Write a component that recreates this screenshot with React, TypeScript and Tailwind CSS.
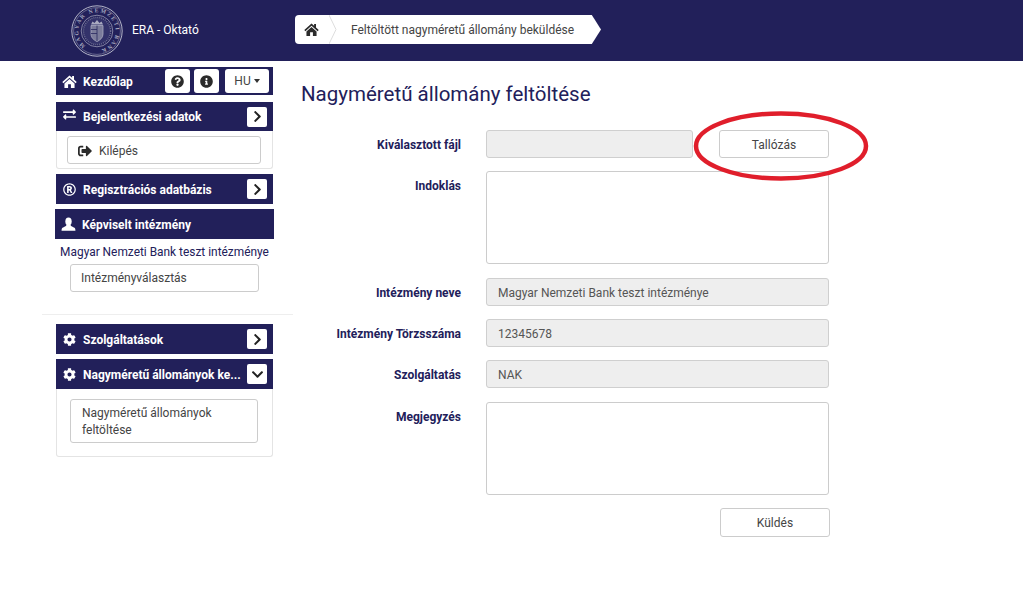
import { FaExchangeAlt, FaSignOutAlt, FaRegRegistered, FaCog, FaChevronRight, FaChevronDown, FaQuestionCircle, FaInfoCircle } from "react-icons/fa";
import type { ReactNode } from "react";

function HomeIcon({ size = 15 }: { size?: number }) {
  return (
    <svg width={size} height={size} viewBox="0 0 16 16" fill="currentColor">
      <path d="M8 1.5 L0.3 8.6 L1.5 9.8 L8 3.9 L14.5 9.8 L15.7 8.6 L12.8 5.9 V2 H10.8 V4.1z" />
      <path d="M8 5.2 L2.6 10 V15 H6.5 V10.8 H9.5 V15 H13.4 V10z" />
    </svg>
  );
}

function UserIcon() {
  return (
    <svg width="15" height="15" viewBox="0 0 16 16" fill="currentColor">
      <ellipse cx="8" cy="4.8" rx="3.4" ry="4.3" />
      <path d="M5.8 8.4 C5.6 10 3 10.4 1.6 11.4 C0.8 12 0.6 13.4 0.6 14.6 H15.4 C15.4 13.4 15.2 12 14.4 11.4 C13 10.4 10.4 10 10.2 8.4z" />
    </svg>
  );
}

function Seal() {
  return (
    <svg width="52" height="52" viewBox="0 0 52 52" className="shrink-0">
      <defs>
        <path id="ring" d="M26 26 m-18.7 0 a18.7 18.7 0 1 1 37.4 0 a18.7 18.7 0 1 1 -37.4 0" />
      </defs>
      <circle cx="26" cy="26" r="25.2" fill="none" stroke="#b4b5c8" strokeWidth="1" />
      <circle cx="26" cy="26" r="23.4" fill="none" stroke="#7f80a0" strokeWidth="0.7" />
      <circle cx="26" cy="26" r="15.8" fill="none" stroke="#9a9bb5" strokeWidth="0.8" />
      <g transform="rotate(-52 26 26)">
        <text fill="#a9aac0" fontSize="5.6" fontFamily="'Liberation Serif', serif" fontWeight="700">
          <textPath href="#ring" textLength="100" lengthAdjust="spacing">MAGYAR NEMZETI BANK</textPath>
        </text>
      </g>
      <circle cx="26" cy="26" r="13.6" fill="#33326a" stroke="#6d6e92" strokeWidth="1.5" strokeDasharray="1 1" />
      <path d="M20 20.5 h12 v8.5 c0 4 -3 6 -6 7.6 c-3 -1.6 -6 -3.6 -6 -7.6z" fill="#7b7c9b" stroke="#a9aac0" strokeWidth="0.8" />
      <path d="M26 20.5 v15.6 M20 24.5 h6 M20 28.5 h6" stroke="#2a2960" strokeWidth="0.8" />
      <path d="M20 19.6 l1.5 -3 l2 1.5 l2.5 -3 l2.5 3 l2 -1.5 l1.5 3z" fill="#a9aac0" />
    </svg>
  );
}

function Head({ icon, children, right, wide, tall = true }: { icon: ReactNode; children: ReactNode; right?: ReactNode; wide?: boolean; tall?: boolean }) {
  return (
    <div className={`flex items-center bg-[#22205a] text-white ${tall ? "h-[30px]" : "h-[29px]"} pl-[6px] pr-[6px] ${wide ? "-mx-px" : ""}`}>
      <span className="w-[15px] flex justify-center text-[13px] mr-[6px] shrink-0">{icon}</span>
      <span className="flex-1 min-w-0 pt-px text-[12px] font-bold whitespace-nowrap">{children}</span>
      {right}
    </div>
  );
}

function Arrow({ down }: { down?: boolean }) {
  return (
    <span className="w-[20px] h-[20px] shrink-0 bg-white rounded-[2px] flex items-center justify-center text-[#222222] text-[13px]">
      {down ? <FaChevronDown /> : <FaChevronRight />}
    </span>
  );
}

function Field({ label, children, className }: { label: string; children: ReactNode; className?: string }) {
  return (
    <div className={`flex items-start ${className ?? ""}`}>
      <label className="w-[160px] pt-[7px] text-right font-bold text-[12px] text-[#22205a] mr-[25px] leading-[16px]">{label}</label>
      <div className="w-[343px]">{children}</div>
    </div>
  );
}

function Disabled({ children }: { children?: ReactNode }) {
  return (
    <div className="h-[28px] bg-[#eeeeee] border border-[#cfcfcf] rounded-[3px] px-[11px] pt-px flex items-center text-[12px] text-[#555555]">
      {children}
    </div>
  );
}

export default function App() {
  return (
    <div className="w-[1023px] h-[595px] bg-white overflow-hidden relative font-['Roboto','Noto_Sans',sans-serif] text-[#333333]">
      <header className="h-[61px] bg-[#22205a] flex items-center pl-[71px]">
        <Seal />
        <span className="ml-[9px] text-white text-[12px] w-[94px] -mt-[2px]">ERA - Oktató</span>
        <div className="ml-[69px] -mt-[2px] h-[29px] w-[306px] bg-white rounded-l-[4px] [clip-path:polygon(0_0,97%_0,100%_50%,97%_100%,0_100%)] flex items-center relative">
          <span className="w-[32px] flex justify-center text-[#2b2b2b]"><HomeIcon /></span>
          <svg width="8" height="29" viewBox="0 0 8 29" className="shrink-0 ml-[2px]">
            <path d="M0 0 L7 14.5 L0 29" fill="none" stroke="#dddddd" />
          </svg>
          <span className="ml-[14px] text-[12px] text-[#444444] whitespace-nowrap">Feltöltött nagyméretű állomány beküldése</span>
        </div>
      </header>

      <div className="flex">
        <aside className="w-[251px] ml-[42px] pt-[6px] shrink-0">
          <div className="ml-[14px] w-[217px]">
            <div className="flex items-center bg-[#22205a] text-white h-[28px] pl-[6px] pr-[4px]">
              <span className="w-[15px] flex justify-center mr-[6px]"><HomeIcon /></span>
              <span className="flex-1 pt-px text-[12px] font-bold">Kezdőlap</span>
              <span className="w-[25px] h-[24px] bg-white rounded-[3px] flex items-center justify-center text-[13px] text-[#2b2b2b] mr-[4px]"><FaQuestionCircle /></span>
              <span className="w-[25px] h-[24px] bg-white rounded-[3px] flex items-center justify-center text-[13px] text-[#2b2b2b] mr-[6px]"><FaInfoCircle /></span>
              <span className="w-[44px] h-[24px] bg-white rounded-[3px] flex items-center justify-center gap-[3px] text-[12px] text-[#444444]">HU
                <span className="border-x-[3.5px] border-x-transparent border-t-[4px] border-t-[#333333]" />
              </span>
            </div>

            <div className="mt-[7px]">
              <Head tall={false} icon={<FaExchangeAlt className="-mt-[5px]" />} right={<Arrow />}>Bejelentkezési adatok</Head>
              <div className="h-[38px] border border-t-0 border-[#e4e4e4] rounded-b-[3px] pl-[10px] pr-[11px] pt-[5px]">
                <div className="h-[28px] border border-[#cccccc] rounded-[3px] flex items-center pl-[10px] pt-px text-[12px] text-[#444444]">
                  <FaSignOutAlt className="text-[14px] text-[#2b2b2b] mr-[7px]" />Kilépés
                </div>
              </div>
            </div>

            <div className="mt-[5px]"><Head icon={<FaRegRegistered />} right={<Arrow />}>Regisztrációs adatbázis</Head></div>
            <div className="mt-[5px]"><Head wide icon={<UserIcon />}>Képviselt intézmény</Head></div>
            <div className="text-center text-[11.9px] text-[#22205a] mt-[3px] pt-px h-[18px] leading-[18px] whitespace-nowrap">Magyar Nemzeti Bank teszt intézménye</div>
            <div className="mt-[4px] ml-[14px] w-[189px] h-[28px] border border-[#cccccc] rounded-[3px] flex items-center pl-[10px] text-[12px] text-[#444444]">Intézményválasztás</div>
          </div>

          <div className="h-px bg-[#eeeeee] mt-[22px]" />

          <div className="ml-[14px] w-[217px] mt-[9px]">
            <Head icon={<FaCog />} right={<Arrow />}>Szolgáltatások</Head>
            <div className="mt-[5px]">
              <Head icon={<FaCog />} right={<Arrow down />}>Nagyméretű állományok ke...</Head>
              <div className="h-[68px] border border-t-0 border-[#e4e4e4] rounded-b-[3px] pt-[10px] pl-[13px]">
                <div className="w-[188px] h-[44px] border border-[#cccccc] rounded-[3px] px-[11px] py-[5px] text-[12px] leading-[17px] text-[#444444]">Nagyméretű állományok feltöltése</div>
              </div>
            </div>
          </div>
        </aside>

        <main className="ml-[8px] w-[600px]">
          <h1 className="mt-[19px] text-[20.5px] leading-[28px] text-[#22205a] whitespace-nowrap">Nagyméretű állomány feltöltése</h1>
          <div className="mt-[22px]">
            <Field label="Kiválasztott fájl">
              <div className="flex justify-between">
                <div className="w-[207px]"><Disabled /></div>
                <div className="w-[110px] h-[28px] border border-[#cccccc] rounded-[3px] pt-px flex items-center justify-center text-[12px] text-[#444444]">Tallózás</div>
              </div>
            </Field>
            <Field label="Indoklás" className="mt-[13px]">
              <div className="h-[93px] border border-[#cccccc] rounded-[3px]" />
            </Field>
            <Field label="Intézmény neve" className="mt-[14px]"><Disabled>Magyar Nemzeti Bank teszt intézménye</Disabled></Field>
            <Field label="Intézmény Törzsszáma" className="mt-[13px]"><Disabled>12345678</Disabled></Field>
            <Field label="Szolgáltatás" className="mt-[13px]"><Disabled>NAK</Disabled></Field>
            <Field label="Megjegyzés" className="mt-[14px]">
              <div className="h-[93px] border border-[#cccccc] rounded-[3px]" />
            </Field>
            <div className="mt-[13px] ml-[419px] w-[110px] h-[29px] border border-[#cccccc] rounded-[3px] flex items-center justify-center text-[12px] text-[#444444]">Küldés</div>
          </div>
        </main>
      </div>

      <svg width="180" height="72" viewBox="0 0 180 72" className="absolute left-[691px] top-[110px] pointer-events-none">
        <ellipse cx="90" cy="36" rx="85" ry="32.5" fill="none" stroke="#e01e2b" strokeWidth="4.5" />
      </svg>
    </div>
  );
}
